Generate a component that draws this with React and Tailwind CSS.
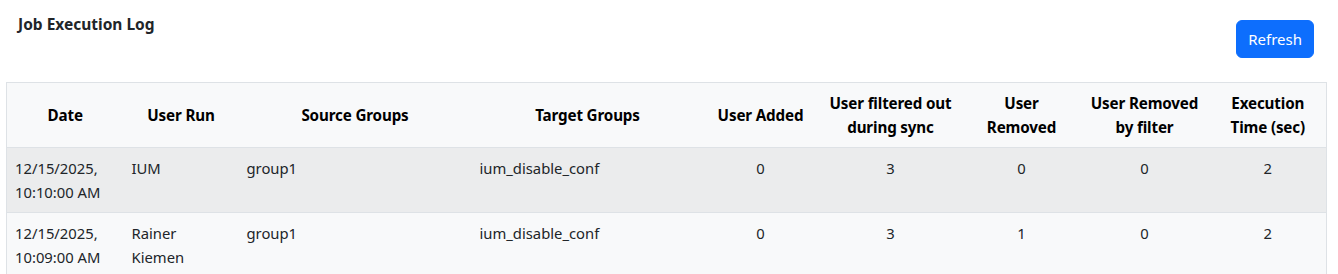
const rows = [
  { date: ["12/15/2025,", "10:10:00 AM"], user: ["IUM"], source: "group1", target: "ium_disable_conf", added: 0, filtered: 3, removed: 0, removedByFilter: 0, time: 2 },
  { date: ["12/15/2025,", "10:09:00 AM"], user: ["Rainer", "Kiemen"], source: "group1", target: "ium_disable_conf", added: 0, filtered: 3, removed: 1, removedByFilter: 0, time: 2 },
];

const columns = [
  { label: ["Date"], width: 117 },
  { label: ["User Run"], width: 115 },
  { label: ["Source Groups"], width: 233 },
  { label: ["Target Groups"], width: 232 },
  { label: ["User Added"], width: 114 },
  { label: ["User filtered out", "during sync"], width: 146 },
  { label: ["User", "Removed"], width: 116 },
  { label: ["User Removed", "by filter"], width: 130 },
  { label: ["Execution", "Time (sec)"], width: 117 },
];

function Lines({ lines }) {
  return lines.map((line, i) => <div key={i} className="whitespace-nowrap">{line}</div>);
}

export default function App() {
  return (
    <div className="min-h-[274px] bg-white px-[6px] text-[14.8px] leading-6 text-[#212529]" style={{ fontFamily: '"Noto Sans", "Open Sans", Arial, sans-serif' }}>
      <div className="flex items-start justify-between pl-[12px] pr-[18px]">
        <h5 className="mt-[12px] text-[15.5px] font-bold leading-6 text-[#212529]">Job Execution Log</h5>
        <button className="mt-[20px] rounded-[6px] border border-[#0d6efd] bg-[#0d6efd] px-[11px] py-[6px] text-[15px] leading-6 text-white">
          Refresh
        </button>
      </div>

      <table className="mt-[24px] w-[1320px] table-fixed border-collapse border border-[#dee2e6]">
        <colgroup>
          {columns.map((c, i) => (
            <col key={i} style={{ width: c.width }} />
          ))}
        </colgroup>
        <thead>
          <tr className="border-b border-[#dee2e6] bg-[#f8f9fa]">
            {columns.map((c, i) => (
              <th key={i} className="px-2 py-2 text-center align-middle text-[15.2px] font-bold tracking-[-0.15px] text-[#000]">
                <Lines lines={c.label} />
              </th>
            ))}
          </tr>
        </thead>
        <tbody>
          {rows.map((r, i) => (
            <tr key={i} className={`border-b border-[#dee2e6] ${i % 2 === 0 ? "bg-[#ebeced]" : "bg-[#f8f9fa]"}`}>
              <td className="px-2 py-2 align-top"><Lines lines={r.date} /></td>
              <td className="px-2 py-2 align-top"><Lines lines={r.user} /></td>
              <td className="px-2 py-2 align-top">{r.source}</td>
              <td className="px-2 py-2 align-top">{r.target}</td>
              <td className="px-2 py-2 text-center align-top">{r.added}</td>
              <td className="px-2 py-2 text-center align-top">{r.filtered}</td>
              <td className="px-2 py-2 text-center align-top">{r.removed}</td>
              <td className="px-2 py-2 text-center align-top">{r.removedByFilter}</td>
              <td className="px-2 py-2 text-center align-top">{r.time}</td>
            </tr>
          ))}
        </tbody>
      </table>
    </div>
  );
}
